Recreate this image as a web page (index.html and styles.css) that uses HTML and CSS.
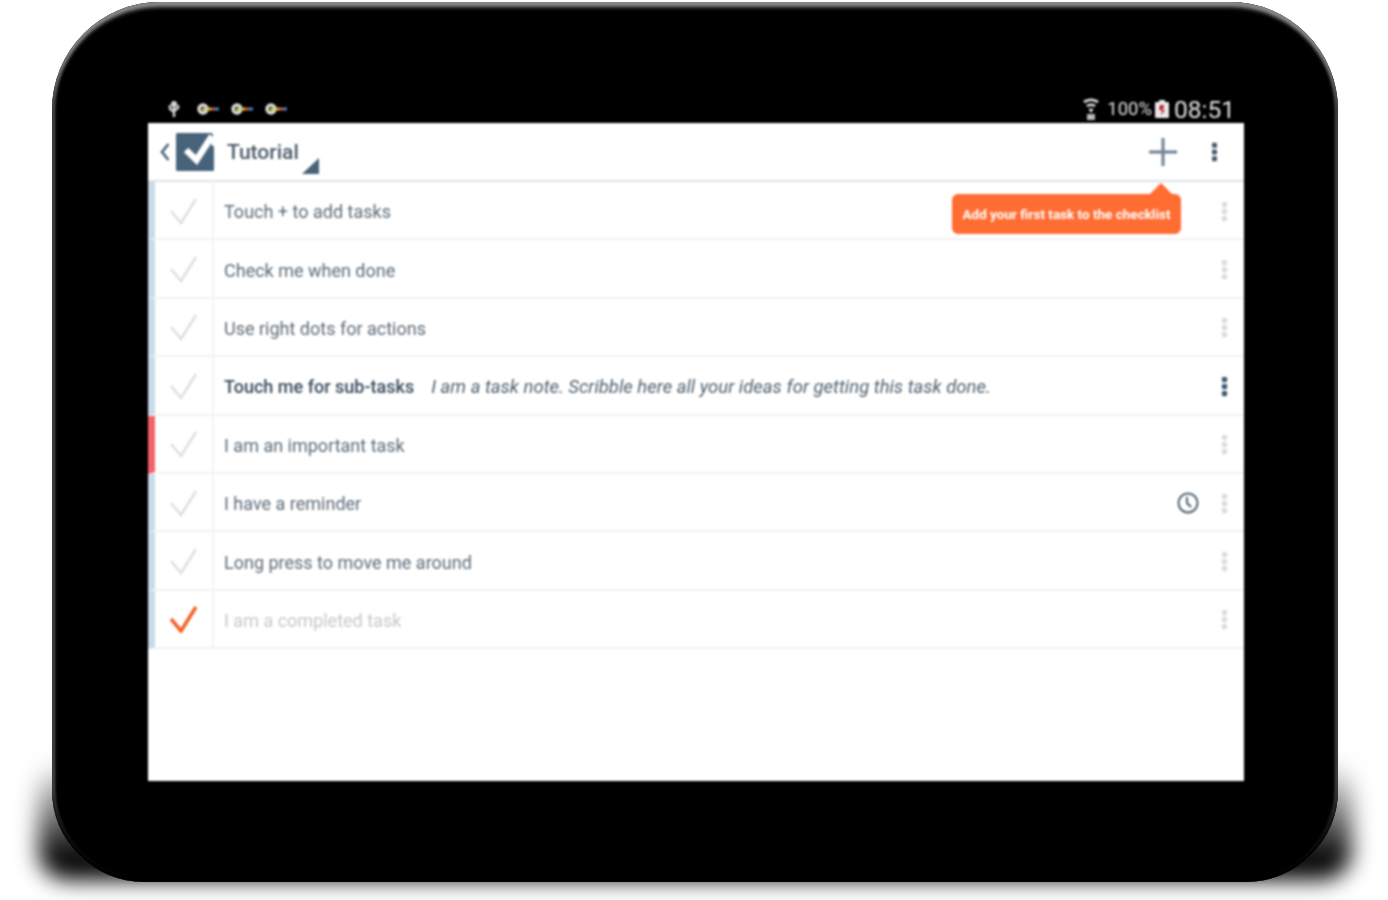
FILE: index.html
```html
<!DOCTYPE html>
<html lang="en">
<head>
    <meta charset="UTF-8">
    <title>Tutorial</title>
    <link rel="stylesheet" href="styles.css">
</head>
<body>
    <svg class="defs" width="0" height="0">
        <symbol id="key" viewBox="0 0 24 12">
            <circle cx="6" cy="6" r="4" fill="none" stroke="#dedede" stroke-width="3.4"/>
            <rect x="5" y="5" width="3" height="2.5" fill="#e8e020"/>
            <rect x="10" y="4.5" width="4" height="3" fill="#c8c030"/>
            <rect x="14" y="4.5" width="4" height="3" fill="#e0503a"/>
            <rect x="18" y="4.5" width="4" height="3" fill="#3f88c0"/>
        </symbol>
        <symbol id="tick" viewBox="0 0 27 27">
            <path d="M1 13 L11 25 L26 1" fill="none"/>
        </symbol>
        <symbol id="dots" viewBox="0 0 8 24">
            <rect x="1" y="1" width="6" height="6" rx="1.5"/>
            <rect x="1" y="9" width="6" height="6" rx="1.5"/>
            <rect x="1" y="17" width="6" height="6" rx="1.5"/>
        </symbol>
    </svg>

    <div class="tablet">
        <div class="status-bar">
            <svg class="usb" viewBox="0 0 12 18" width="12" height="18">
                <path d="M6 17 V3 M2 5 V9 L6 12 M10 5 V8 L6 11" fill="none" stroke="#d8d8d8" stroke-width="2.4"/>
                <circle cx="6" cy="4" r="3" fill="#d8d8d8"/>
            </svg>
            <svg class="key" width="24" height="12"><use href="#key"/></svg>
            <svg class="key" width="24" height="12"><use href="#key"/></svg>
            <svg class="key" width="24" height="12"><use href="#key"/></svg>
            <div class="status-right">
                <svg class="wifi" viewBox="0 0 18 24" width="18" height="24">
                    <path d="M1 4 Q9 -1 17 4 L15 6 Q9 2 3 6 Z M4 8 Q9 5 14 8 L12 10 Q9 8 6 10 Z M6.5 12 Q9 11 11.5 12 L9 16 Z" fill="#e8e8e8"/>
                    <rect x="5" y="17" width="8" height="6" fill="#b8b8b8"/>
                </svg>
                <span class="battery-text">100%</span>
                <svg class="battery" viewBox="0 0 14 18" width="14" height="18">
                    <rect x="4" y="0" width="6" height="3" fill="#e8e8e8"/>
                    <rect x="0" y="2" width="14" height="16" rx="1" fill="#e8e8e8"/>
                    <path d="M5 5 H9 L8 10 H10 L6 15 L7 10 H4 Z" fill="#c0202a"/>
                </svg>
                <span class="clock-text">08:51</span>
            </div>
        </div>

        <div class="screen">
            <div class="action-bar">
                <svg class="back" viewBox="0 0 10 18" width="10" height="18">
                    <path d="M8.5 1 L2 9 L8.5 17" fill="none" stroke="#47637a" stroke-width="2.6"/>
                </svg>
                <svg class="logo" viewBox="0 0 38 38" width="38" height="38">
                    <rect width="38" height="38" rx="1.5" fill="#47637a"/>
                    <path d="M38 0 V14 L35 11 Z" fill="#fff"/>
                    <path d="M36 0 L38 0 L38 4 Z" fill="#fff"/>
                    <path d="M10 17 L20.5 27 L36 3" fill="none" stroke="#fff" stroke-width="6.5"/>
                </svg>
                <span class="app-title">Tutorial</span>
                <svg class="corner" viewBox="0 0 17 16" width="17" height="16">
                    <path d="M17 0 V16 H0 Z" fill="#47637a"/>
                </svg>
                <svg class="plus" viewBox="0 0 28 28" width="28" height="28">
                    <path d="M14 0 V28 M0 14 H28" stroke="#6d7f90" stroke-width="3"/>
                </svg>
                <svg class="menu" width="7" height="20"><use href="#dots"/></svg>
            </div>

            <div class="task-list">
                <div class="tip">Add your first task to the checklist</div>

                <div class="task">
                    <div class="check"><svg class="tick" width="27" height="27"><use href="#tick"/></svg></div>
                    <div class="task-body">Touch + to add tasks</div>
                    <svg class="dots" width="7" height="21"><use href="#dots"/></svg>
                </div>
                <div class="task">
                    <div class="check"><svg class="tick" width="27" height="27"><use href="#tick"/></svg></div>
                    <div class="task-body">Check me when done</div>
                    <svg class="dots" width="7" height="21"><use href="#dots"/></svg>
                </div>
                <div class="task">
                    <div class="check"><svg class="tick" width="27" height="27"><use href="#tick"/></svg></div>
                    <div class="task-body">Use right dots for actions</div>
                    <svg class="dots" width="7" height="21"><use href="#dots"/></svg>
                </div>
                <div class="task">
                    <div class="check"><svg class="tick" width="27" height="27"><use href="#tick"/></svg></div>
                    <div class="task-body"><b class="parent">Touch me for sub-tasks</b><i class="note">I am a task note. Scribble here all your ideas for getting this task done.</i></div>
                    <svg class="dots dots-dark" width="7" height="21"><use href="#dots"/></svg>
                </div>
                <div class="task important">
                    <div class="check"><svg class="tick" width="27" height="27"><use href="#tick"/></svg></div>
                    <div class="task-body">I am an important task</div>
                    <svg class="dots" width="7" height="21"><use href="#dots"/></svg>
                </div>
                <div class="task">
                    <div class="check"><svg class="tick" width="27" height="27"><use href="#tick"/></svg></div>
                    <div class="task-body">I have a reminder</div>
                    <svg class="alarm" viewBox="0 0 22 22" width="22" height="22">
                        <circle cx="11" cy="11" r="9.5" fill="none" stroke="#4d5f6e" stroke-width="2"/>
                        <path d="M10 5 V11 L14 15" fill="none" stroke="#4d5f6e" stroke-width="2"/>
                    </svg>
                    <svg class="dots" width="7" height="21"><use href="#dots"/></svg>
                </div>
                <div class="task">
                    <div class="check"><svg class="tick" width="27" height="27"><use href="#tick"/></svg></div>
                    <div class="task-body">Long press to move me around</div>
                    <svg class="dots" width="7" height="21"><use href="#dots"/></svg>
                </div>
                <div class="task done">
                    <div class="check"><svg class="tick" width="27" height="27"><use href="#tick"/></svg></div>
                    <div class="task-body">I am a completed task</div>
                    <svg class="dots" width="7" height="21"><use href="#dots"/></svg>
                </div>
            </div>
        </div>
    </div>
</body>
</html>
```

FILE: styles.css
```css
html, body {
    height: 100%;
}
body {
    margin: 0;
    background-color: #fff;
    font-family: 'Roboto', sans-serif;
    overflow: hidden;
}
.defs {
    display: block;
}
.tablet {
    position: relative;
    box-sizing: border-box;
    width: 1286px;
    height: 880px;
    margin: 2px 0 0 52px;
    padding: 93px 94px 0 96px;
    background-color: #000;
    border-radius: 108px 108px 92px 92px;
    box-shadow: inset 0 -7px 4px 0 #000, inset 0 6px 4px -1px #888, inset 0 0 3px 3px #555;
}
.tablet::before {
    content: '';
    position: absolute;
    z-index: -1;
    left: -14px;
    right: -14px;
    bottom: 2px;
    height: 120px;
    background: linear-gradient(rgba(0, 0, 0, 0), #000 85%);
    border-radius: 30px;
    filter: blur(11px);
}
.status-bar {
    display: flex;
    align-items: center;
    height: 28px;
    padding-left: 20px;
    filter: blur(0.8px);
}
.usb {
    margin-right: 17px;
}
.key {
    margin-right: 10px;
}
.status-right {
    display: flex;
    align-items: center;
    margin-left: auto;
    padding-right: 9px;
    color: #e2e2e2;
}
.wifi {
    margin-right: 7px;
}
.battery-text {
    font-size: 18.5px;
}
.battery {
    margin: 0 5px 0 3px;
}
.clock-text {
    font-size: 24.5px;
}
.screen {
    height: 658px;
    background-color: #fff;
    filter: blur(0.8px);
}
.action-bar {
    display: flex;
    align-items: center;
    box-sizing: border-box;
    height: 59px;
    padding-left: 12px;
    border-bottom: 2px solid #e0e2e4;
}
.back {
    margin-right: 6px;
}
.logo {
    margin-right: 13px;
}
.app-title {
    color: #4a5a68;
    font-size: 21px;
    font-weight: 500;
}
.corner {
    align-self: flex-end;
    margin: 0 0 6px 3px;
}
.plus {
    margin-left: auto;
    margin-right: 34px;
}
.menu {
    margin-right: 26px;
    fill: #47586a;
}
.task-list {
    position: relative;
}
.tip {
    position: absolute;
    top: 12px;
    left: 804px;
    width: 229px;
    height: 40px;
    line-height: 41px;
    text-align: center;
    color: #fff;
    background-color: #ff6d33;
    border-radius: 6px;
    font-size: 13.5px;
    font-weight: 700;
    white-space: nowrap;
}
.tip::before {
    content: '';
    position: absolute;
    top: -11px;
    left: 197px;
    border-left: 12px solid transparent;
    border-right: 12px solid transparent;
    border-bottom: 12px solid #ff6d33;
}
.task {
    display: flex;
    align-items: center;
    box-sizing: border-box;
    height: 58.4px;
    padding-top: 2px;
    border-left: 7px solid #c8dbec;
    border-bottom: 2px solid #f1f2f3;
}
.task.important {
    border-left-color: #f4626c;
}
.check {
    display: flex;
    align-items: center;
    justify-content: center;
    flex-shrink: 0;
    align-self: stretch;
    box-sizing: border-box;
    width: 59px;
    margin-top: -2px;
    padding: 2px 1px 0 0;
    border-right: 2px solid #f4f4f5;
}
.tick {
    stroke: #dcdedf;
    stroke-width: 2.4;
}
.task-body {
    flex: 1;
    padding: 1px 0 0 10px;
    color: #5c6b78;
    font-size: 18px;
    white-space: nowrap;
}
.parent {
    color: #36495b;
    font-weight: 500;
}
.note {
    margin-left: 17px;
    color: #4d5f6e;
    font-size: 18.5px;
}
.alarm {
    margin-right: 22px;
}
.dots {
    flex-shrink: 0;
    margin-right: 16px;
    fill: #dcdcdc;
}
.dots-dark {
    fill: #3f5a75;
}
.done .task-body {
    color: #c4c7ca;
}
.done .tick {
    stroke: #f26024;
    stroke-width: 3.6;
}
```
